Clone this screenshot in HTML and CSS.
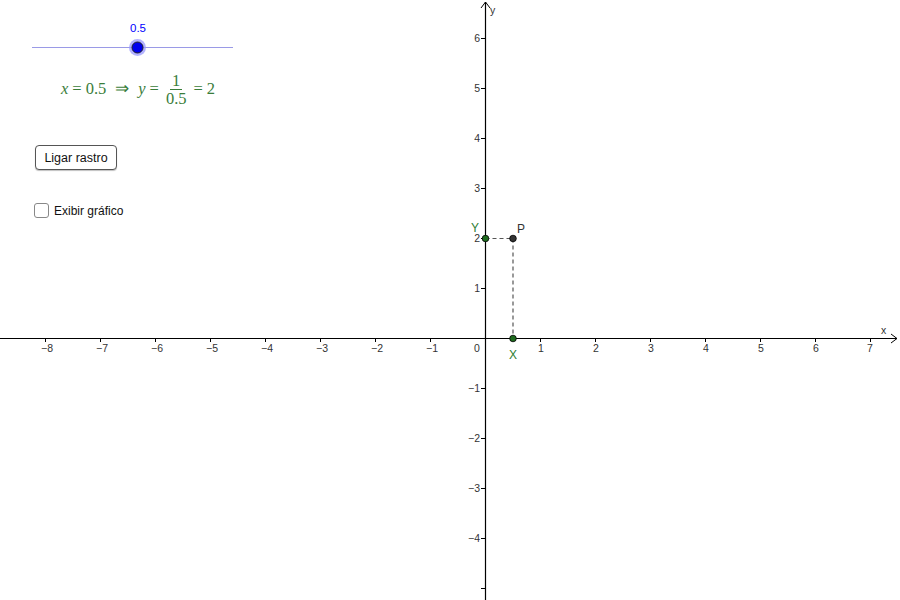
FILE: index.html
```html
<!DOCTYPE html>
<html>
<head>
<meta charset="utf-8">
<link rel="stylesheet" href="styles.css">
</head>
<body>
<div class="stage">
  <svg class="graph" width="900" height="600" viewBox="0 0 900 600" xmlns="http://www.w3.org/2000/svg">
    <g stroke="#000" stroke-width="1.2" fill="none">
      <line x1="0" y1="338.5" x2="897" y2="338.5"/>
      <polyline points="891,334 897,338.5 891,343" stroke-width="1"/>
      <line x1="485.5" y1="2" x2="485.5" y2="600"/>
      <polyline points="481,8 485.5,2 490,8" stroke-width="1"/>
    </g>
    <g stroke="#000" stroke-width="1">
      <line x1="45.5" y1="338" x2="45.5" y2="342"/>
      <line x1="100.5" y1="338" x2="100.5" y2="342"/>
      <line x1="155.5" y1="338" x2="155.5" y2="342"/>
      <line x1="210.5" y1="338" x2="210.5" y2="342"/>
      <line x1="265.5" y1="338" x2="265.5" y2="342"/>
      <line x1="320.5" y1="338" x2="320.5" y2="342"/>
      <line x1="375.5" y1="338" x2="375.5" y2="342"/>
      <line x1="430.5" y1="338" x2="430.5" y2="342"/>
      <line x1="540.5" y1="338" x2="540.5" y2="342"/>
      <line x1="595.5" y1="338" x2="595.5" y2="342"/>
      <line x1="650.5" y1="338" x2="650.5" y2="342"/>
      <line x1="705.5" y1="338" x2="705.5" y2="342"/>
      <line x1="760.5" y1="338" x2="760.5" y2="342"/>
      <line x1="815.5" y1="338" x2="815.5" y2="342"/>
      <line x1="870.5" y1="338" x2="870.5" y2="342"/>
      <line x1="481" y1="38.5" x2="485" y2="38.5"/>
      <line x1="481" y1="88.5" x2="485" y2="88.5"/>
      <line x1="481" y1="138.5" x2="485" y2="138.5"/>
      <line x1="481" y1="188.5" x2="485" y2="188.5"/>
      <line x1="481" y1="238.5" x2="485" y2="238.5"/>
      <line x1="481" y1="288.5" x2="485" y2="288.5"/>
      <line x1="481" y1="388.5" x2="485" y2="388.5"/>
      <line x1="481" y1="438.5" x2="485" y2="438.5"/>
      <line x1="481" y1="488.5" x2="485" y2="488.5"/>
      <line x1="481" y1="538.5" x2="485" y2="538.5"/>
      <line x1="481" y1="588.5" x2="485" y2="588.5"/>
    </g>
    <g class="tick" text-anchor="middle">
      <text x="47" y="352">−8</text>
      <text x="102" y="352">−7</text>
      <text x="157" y="352">−6</text>
      <text x="212" y="352">−5</text>
      <text x="267" y="352">−4</text>
      <text x="322" y="352">−3</text>
      <text x="377" y="352">−2</text>
      <text x="432" y="352">−1</text>
      <text x="477" y="352">0</text>
      <text x="541" y="352">1</text>
      <text x="596" y="352">2</text>
      <text x="651" y="352">3</text>
      <text x="706" y="352">4</text>
      <text x="761" y="352">5</text>
      <text x="816" y="352">6</text>
      <text x="870" y="352">7</text>
    </g>
    <g class="tick" text-anchor="end">
      <text x="480" y="42">6</text>
      <text x="480" y="92">5</text>
      <text x="480" y="142">4</text>
      <text x="480" y="192">3</text>
      <text x="480" y="242">2</text>
      <text x="480" y="292">1</text>
      <text x="480" y="392">−1</text>
      <text x="480" y="442">−2</text>
      <text x="480" y="492">−3</text>
      <text x="480" y="542">−4</text>
    </g>
    <text class="tick" x="881" y="334">x</text>
    <text class="tick" x="490" y="14">y</text>
    <g stroke="#555" stroke-width="1.2" stroke-dasharray="4,3" fill="none">
      <line x1="485.5" y1="238.5" x2="513" y2="238.5"/>
      <line x1="513" y1="238.5" x2="513" y2="338.5"/>
    </g>
    <circle cx="485.5" cy="238.5" r="3.3" fill="#1e6b1e" stroke="#000" stroke-width="0.8"/>
    <circle cx="513" cy="238.5" r="3.3" fill="#333" stroke="#000" stroke-width="0.8"/>
    <circle cx="513" cy="338.5" r="3.3" fill="#1e6b1e" stroke="#000" stroke-width="0.8"/>
    <text class="lbl green" x="471" y="232">Y</text>
    <text class="lbl" x="517" y="233">P</text>
    <text class="lbl green" x="509" y="359">X</text>
    <line x1="32" y1="47.5" x2="233" y2="47.5" stroke="#9a9ae6" stroke-width="1"/>
    <circle cx="137.5" cy="47.5" r="8.5" fill="#9999ff" opacity="0.75"/>
    <circle cx="137.5" cy="47.5" r="5.5" fill="#0000ee" stroke="#222" stroke-width="1"/>
    <text class="slab" x="138" y="32" text-anchor="middle">0.5</text>
  </svg>
  <div class="panel">
    <div class="formula">
      <i>x</i><span class="op">=</span>0.5<span class="op imp">⇒</span><i>y</i><span class="op">=</span><span class="frac"><span class="num">1</span><span class="den">0.5</span></span><span class="op">=</span>2
    </div>
    <button class="btn">Ligar rastro</button>
    <label class="check"><span class="box"></span>Exibir gráfico</label>
  </div>
</div>
</body>
</html>
```
FILE: styles.css
```css
html, body {
  margin: 0;
  padding: 0;
  background: #fff;
}
.stage {
  position: relative;
  width: 900px;
  height: 600px;
  overflow: hidden;
  font-family: "Liberation Sans", Arial, sans-serif;
}
.graph {
  position: absolute;
  left: 0;
  top: 0;
}
.tick {
  font-family: "Liberation Sans", Arial, sans-serif;
  font-size: 10.5px;
  fill: #333;
}
.lbl {
  font-family: "Liberation Sans", Arial, sans-serif;
  font-size: 12px;
  fill: #333;
}
.lbl.green {
  fill: #2e7d32;
}
.slab {
  font-family: "Liberation Sans", Arial, sans-serif;
  font-size: 11.5px;
  fill: #0000ff;
}
.panel {
  position: absolute;
  left: 0;
  top: 0;
  display: flex;
  flex-direction: column;
  align-items: flex-start;
  padding: 69px 0 0 61px;
}
.formula {
  font-family: "Liberation Serif", "Times New Roman", serif;
  font-size: 16.5px;
  color: #3a7d3a;
  display: flex;
  align-items: center;
  white-space: nowrap;
  height: 40px;
}
.formula i {
  font-style: italic;
}
.op {
  margin: 0 4px;
}
.op.imp {
  margin: 0 9px;
}
.frac {
  display: inline-flex;
  flex-direction: column;
  align-items: center;
  margin: 0 1px;
  line-height: 17px;
}
.frac .num {
  padding: 0 2px;
  border-bottom: 1px solid #3a7d3a;
}
.frac .den {
  padding: 0 2px;
}
.btn {
  margin: 36px 0 0 -26px;
  height: 25px;
  width: 82px;
  padding: 0;
  background: #fff;
  border: 1px solid #555;
  border-radius: 4px;
  box-shadow: 0 1px 1px rgba(0,0,0,0.25);
  font-family: "Liberation Sans", Arial, sans-serif;
  font-size: 12.5px;
  color: #111;
}
.check {
  margin: 33px 0 0 -27px;
  display: flex;
  align-items: center;
  font-size: 12px;
  color: #111;
}
.box {
  width: 13px;
  height: 13px;
  border: 1px solid #888;
  border-radius: 3px;
  margin-right: 5px;
  background: #fff;
}
```
